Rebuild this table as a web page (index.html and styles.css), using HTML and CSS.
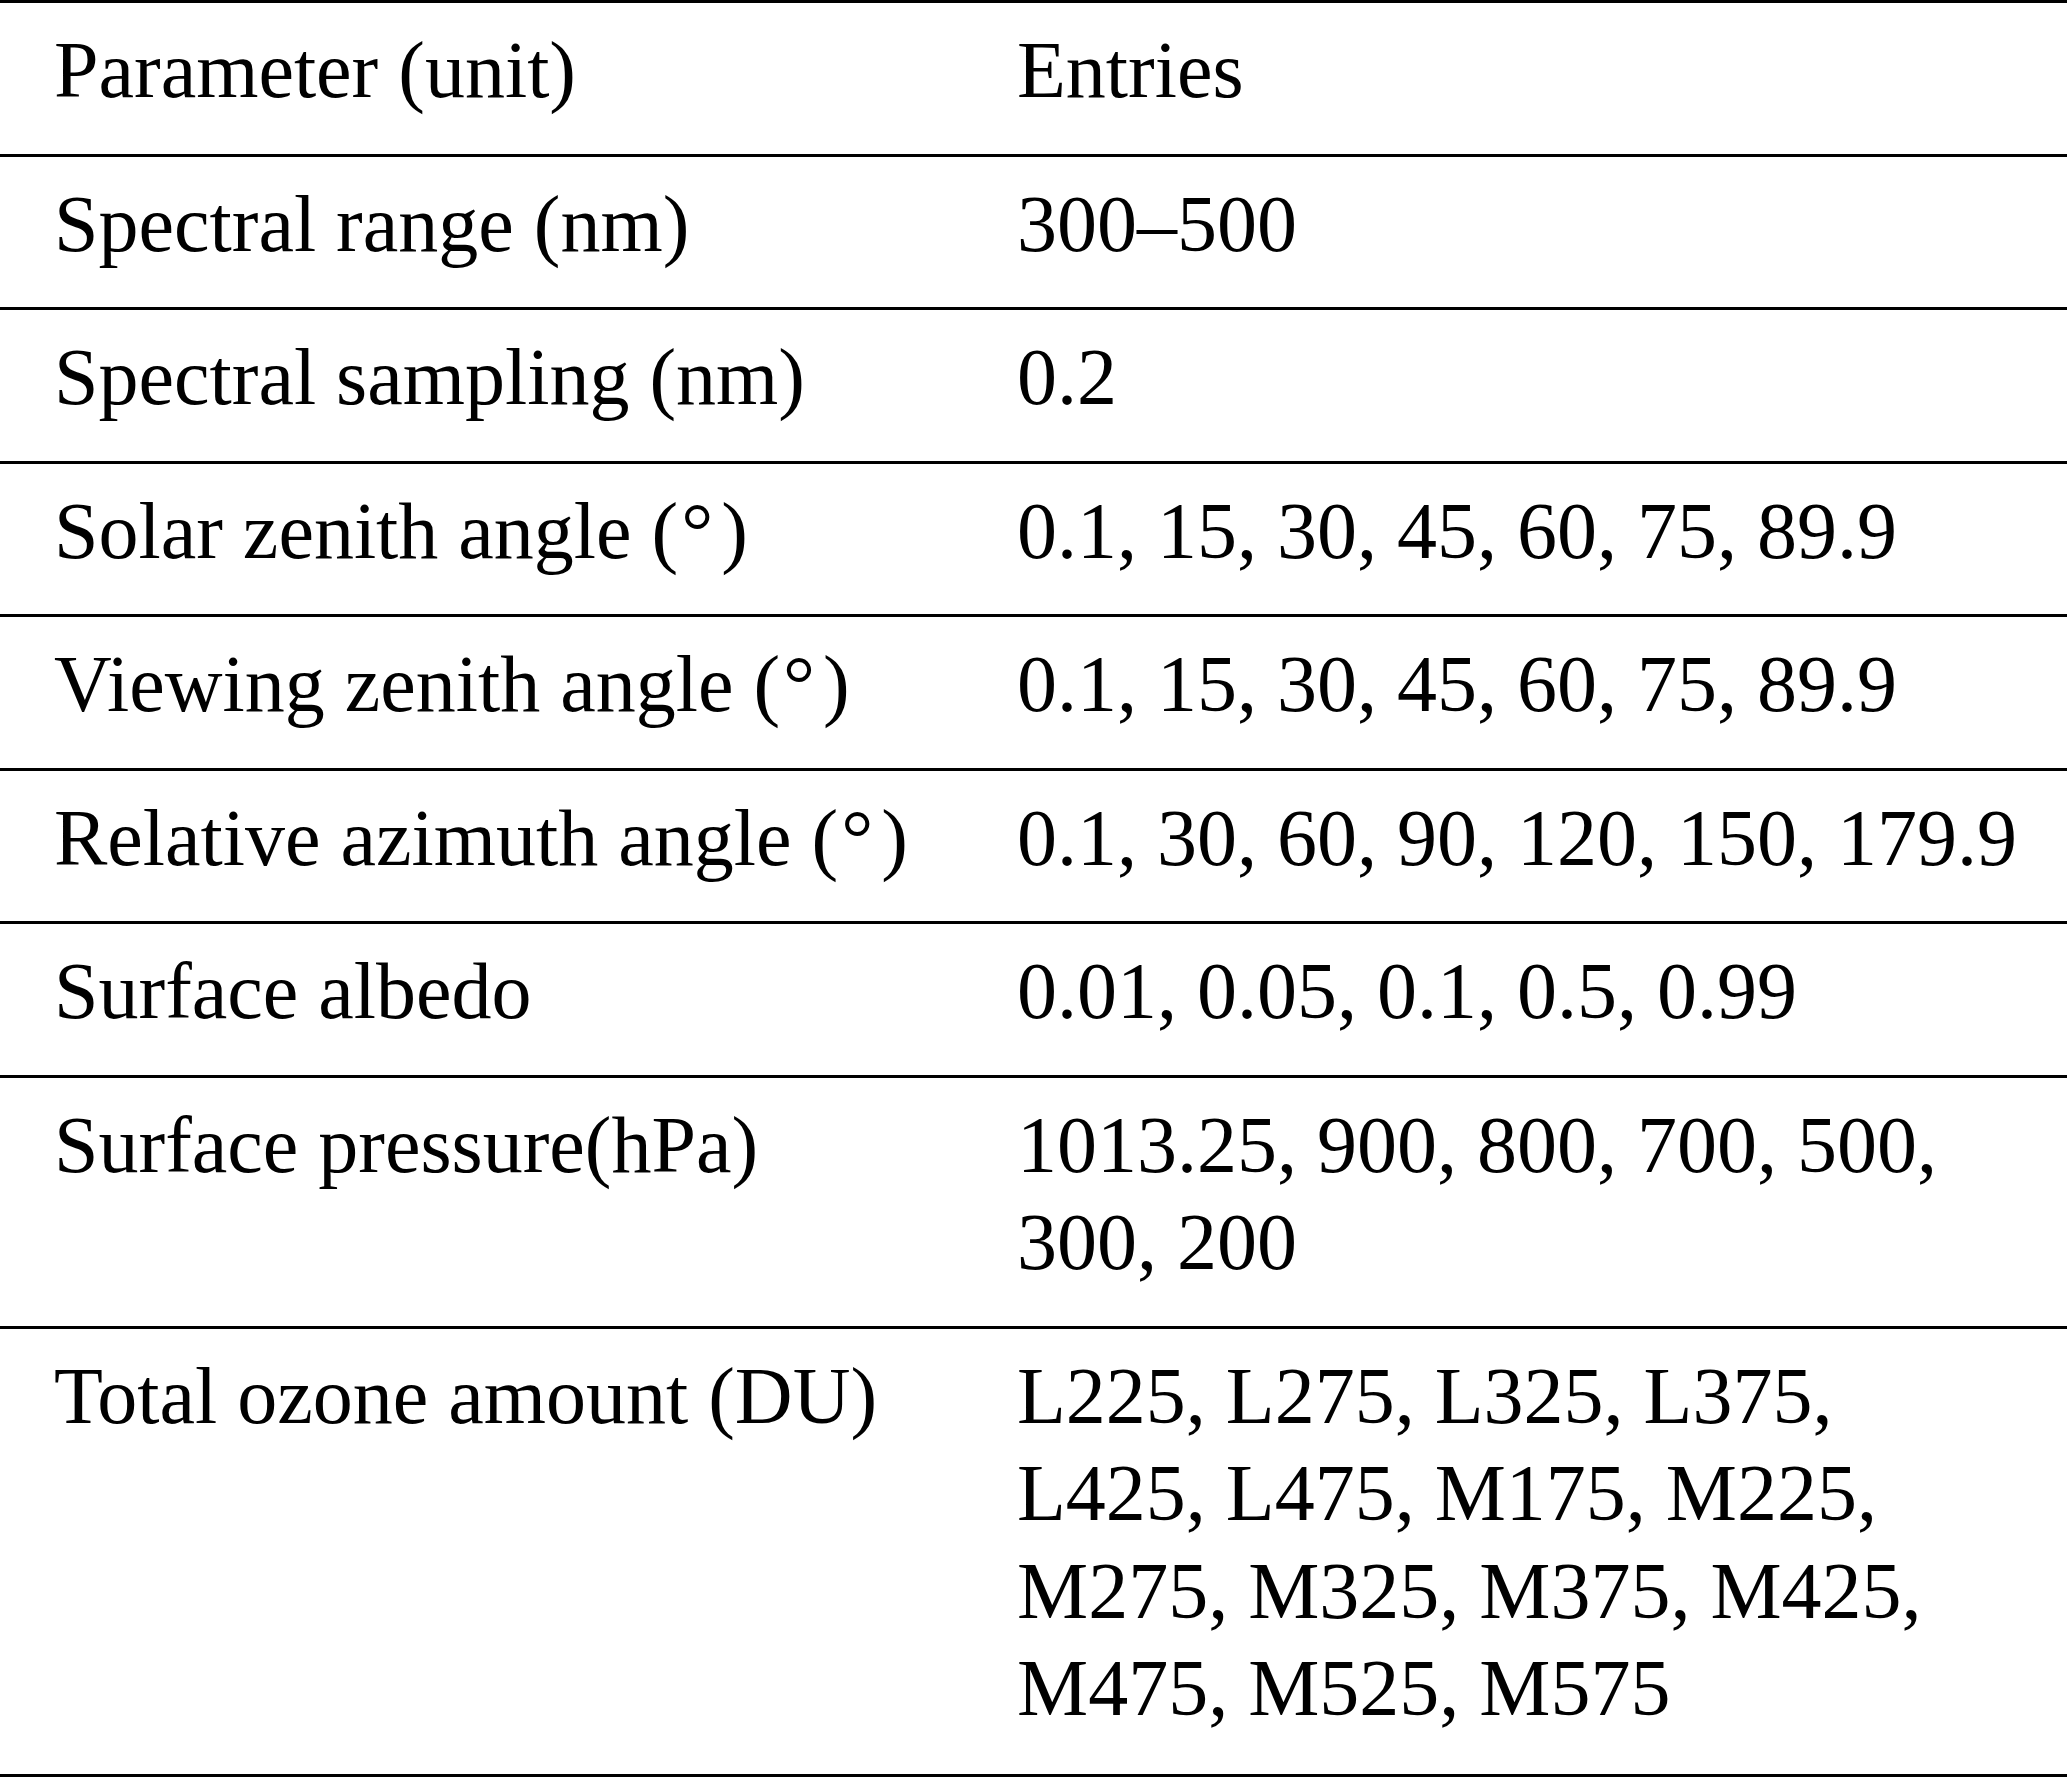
FILE: index.html
```html
<!DOCTYPE html>
<html lang="en">
<head>
<meta charset="utf-8">
<title>Parameters</title>
<link rel="stylesheet" href="styles.css">
</head>
<body>
<div class="table">
  <div class="row head">
    <div class="cell c1">Parameter (unit)</div>
    <div class="cell c2">Entries</div>
  </div>
  <div class="row">
    <div class="cell c1">Spectral range (nm)</div>
    <div class="cell c2">300–500</div>
  </div>
  <div class="row">
    <div class="cell c1">Spectral sampling (nm)</div>
    <div class="cell c2">0.2</div>
  </div>
  <div class="row">
    <div class="cell c1">Solar zenith angle (<span class="deg">°</span>)</div>
    <div class="cell c2">0.1, 15, 30, 45, 60, 75, 89.9</div>
  </div>
  <div class="row">
    <div class="cell c1">Viewing zenith angle (<span class="deg">°</span>)</div>
    <div class="cell c2">0.1, 15, 30, 45, 60, 75, 89.9</div>
  </div>
  <div class="row">
    <div class="cell c1">Relative azimuth angle (<span class="deg">°</span>)</div>
    <div class="cell c2">0.1, 30, 60, 90, 120, 150, 179.9</div>
  </div>
  <div class="row">
    <div class="cell c1">Surface albedo</div>
    <div class="cell c2">0.01, 0.05, 0.1, 0.5, 0.99</div>
  </div>
  <div class="row">
    <div class="cell c1">Surface pressure(hPa)</div>
    <div class="cell c2">1013.25, 900, 800, 700, 500,<br>300, 200</div>
  </div>
  <div class="row last">
    <div class="cell c1">Total ozone amount (DU)</div>
    <div class="cell c2">L225, L275, L325, L375,<br>L425, L475, M175, M225,<br>M275, M325, M375, M425,<br>M475, M525, M575</div>
  </div>
</div>
</body>
</html>
```

FILE: styles.css
```css
html, body {
  margin: 0;
  padding: 0;
  background: #ffffff;
}

body {
  font-family: "Liberation Serif", "Times New Roman", serif;
  font-size: 80px;
  color: #000000;
  width: 2067px;
}

.table {
  display: flex;
  flex-direction: column;
}

.row {
  display: grid;
  grid-template-columns: 963px 1fr;
  border-top: 3px solid #000000;
  padding: 19px 0 34px 0;
  line-height: 97.5px;
}

.row.last {
  border-bottom: 3px solid #000000;
  padding-bottom: 36px;
}

.cell {
  white-space: nowrap;
}

.c1 {
  padding-left: 54px;
}

.c2 {
  padding-left: 54px;
}

.deg {
  margin: 0 8px 0 3px;
}
```
